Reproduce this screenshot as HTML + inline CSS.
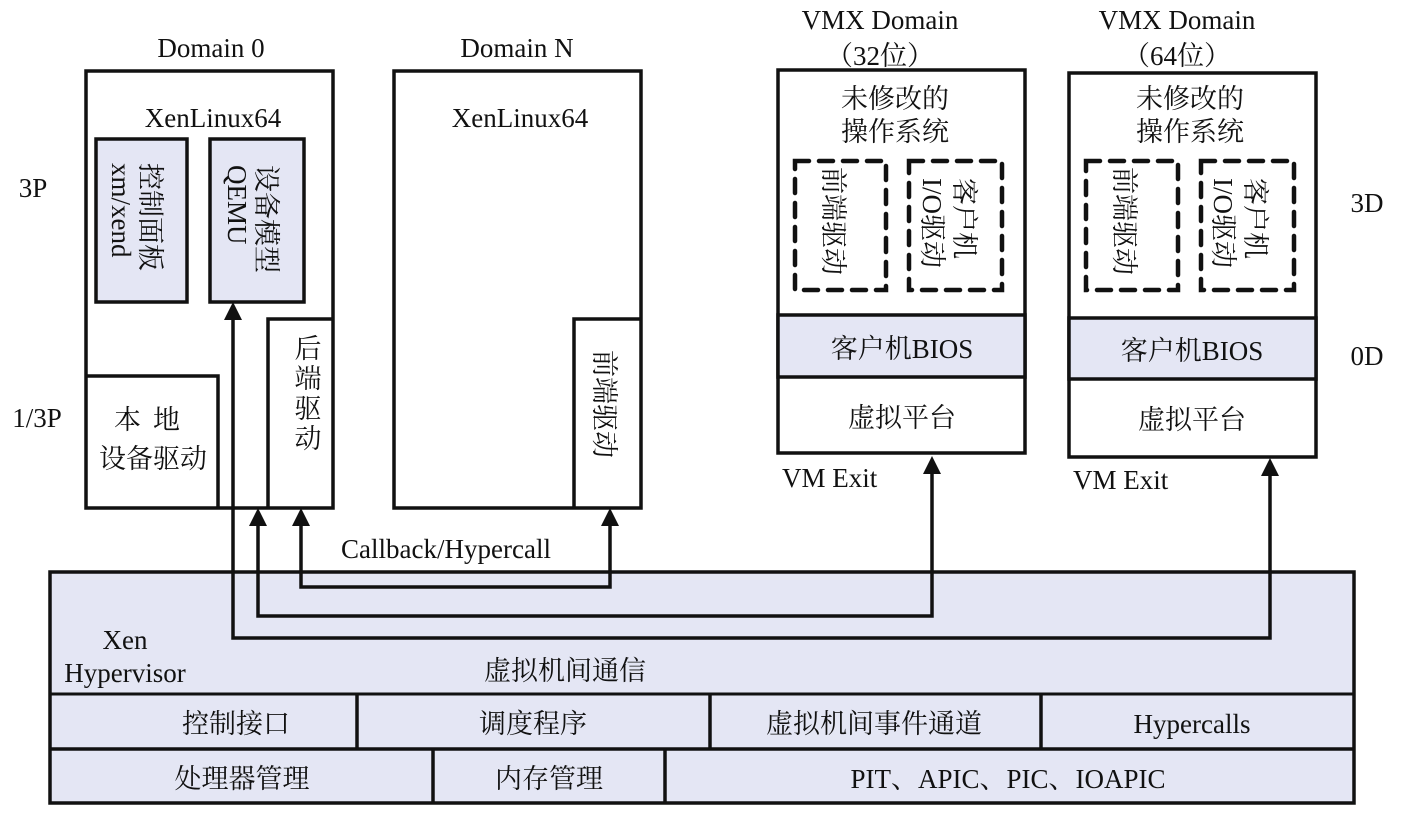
<!DOCTYPE html>
<html><head><meta charset="utf-8"><style>
html,body{margin:0;padding:0;background:#fff;}
svg{display:block;}
text{font-family:"Liberation Serif","Noto Serif CJK SC",serif;font-size:27px;fill:#111;}
.c{text-anchor:middle;}
</style></head><body>
<svg width="1405" height="816" viewBox="0 0 1405 816" xmlns="http://www.w3.org/2000/svg">
<g fill="none" stroke="#111" stroke-width="3.5">
<rect x="50" y="572" width="1304" height="231" fill="#e4e6f4"/>
<line x1="50" y1="694" x2="1354" y2="694" stroke-width="3"/>
<line x1="50" y1="749" x2="1354" y2="749"/>
<line x1="357" y1="694" x2="357" y2="749"/>
<line x1="710" y1="694" x2="710" y2="749"/>
<line x1="1041" y1="694" x2="1041" y2="749"/>
<line x1="433" y1="749" x2="433" y2="803"/>
<line x1="665" y1="749" x2="665" y2="803"/>
<rect x="86" y="71" width="247" height="437"/>
<rect x="96" y="139" width="91" height="163" fill="#e4e6f4"/>
<rect x="210" y="139" width="94" height="163" fill="#e4e6f4"/>
<polyline points="86,376 218,376 218,508"/>
<polyline points="333,319 268,319 268,508"/>
<rect x="394" y="71" width="247" height="437"/>
<polyline points="641,319 574,319 574,508"/>
<rect x="778" y="70" width="247" height="383"/>
<rect x="778" y="315" width="247" height="62" fill="#e4e6f4"/>
<rect x="1069" y="73" width="247" height="384"/>
<rect x="1069" y="318" width="247" height="61" fill="#e4e6f4"/>
<g stroke-width="4.5" stroke-dasharray="14 10" stroke-linecap="round">
<rect x="795" y="161" width="91" height="129"/>
<rect x="909" y="161" width="93" height="129"/>
<rect x="1086" y="161" width="92" height="129"/>
<rect x="1201" y="161" width="93" height="129"/>
</g>
<polyline points="301,520 301,587 610,587 610,520"/>
<polyline points="258,520 258,616 932,616 932,470"/>
<polyline points="233,316 233,638 1270,638 1270,470"/>
</g>
<g fill="#111">
<polygon points="233,302 224,320 242,320"/>
<polygon points="258,508 249,526 267,526"/>
<polygon points="301,508 292,526 310,526"/>
<polygon points="610,508 601,526 619,526"/>
<polygon points="932,456 923,474 941,474"/>
<polygon points="1270,458 1261,476 1279,476"/>
</g>
<text x="211" y="57" class="c">Domain 0</text>
<text x="517" y="57" class="c">Domain N</text>
<text x="213" y="127" class="c">XenLinux64</text>
<text x="520" y="127" class="c">XenLinux64</text>
<text x="880" y="29" class="c">VMX Domain</text>
<text x="880" y="65" class="c">（32位）</text>
<text x="1177" y="29" class="c">VMX Domain</text>
<text x="1177" y="65" class="c">（64位）</text>
<text x="33" y="197" class="c">3P</text>
<text x="37" y="427" class="c">1/3P</text>
<text x="1367" y="212" class="c">3D</text>
<text x="1367" y="365" class="c">0D</text>
<text x="141" y="163" transform="rotate(90 141 163)">控制面板</text>
<text x="112" y="163" transform="rotate(90 112 163)">xm/xend</text>
<text x="257" y="165" transform="rotate(90 257 165)">设备模型</text>
<text x="228" y="165" transform="rotate(90 228 165)">QEMU</text>
<text x="153" y="429" class="c" letter-spacing="12">本地</text>
<text x="153" y="468" class="c">设备驱动</text>
<text x="308" y="358" class="c">后</text>
<text x="308" y="388" class="c">端</text>
<text x="308" y="418" class="c">驱</text>
<text x="308" y="448" class="c">动</text>
<text x="595" y="350" transform="rotate(90 595 350)">前端驱动</text>
<text x="895" y="108" class="c">未修改的</text>
<text x="895" y="141" class="c">操作系统</text>
<text x="1190" y="108" class="c">未修改的</text>
<text x="1190" y="141" class="c">操作系统</text>
<text x="824" y="167" transform="rotate(90 824 167)">前端驱动</text>
<text x="955" y="178" transform="rotate(90 955 178)">客户机</text>
<text x="923" y="178" transform="rotate(90 923 178)">I/O驱动</text>
<text x="1115" y="167" transform="rotate(90 1115 167)">前端驱动</text>
<text x="1246" y="178" transform="rotate(90 1246 178)">客户机</text>
<text x="1214" y="178" transform="rotate(90 1214 178)">I/O驱动</text>
<text x="902" y="358" class="c">客户机BIOS</text>
<text x="1192" y="360" class="c">客户机BIOS</text>
<text x="902" y="427" class="c">虚拟平台</text>
<text x="1192" y="429" class="c">虚拟平台</text>
<text x="782" y="487">VM Exit</text>
<text x="1073" y="489">VM Exit</text>
<text x="446" y="558" class="c">Callback/Hypercall</text>
<text x="125" y="649" class="c">Xen</text>
<text x="125" y="682" class="c">Hypervisor</text>
<text x="565" y="680" class="c">虚拟机间通信</text>
<text x="236" y="733" class="c">控制接口</text>
<text x="533" y="733" class="c">调度程序</text>
<text x="874" y="733" class="c">虚拟机间事件通道</text>
<text x="1192" y="733" class="c">Hypercalls</text>
<text x="242" y="788" class="c">处理器管理</text>
<text x="549" y="788" class="c">内存管理</text>
<text x="1008" y="788" class="c">PIT、APIC、PIC、IOAPIC</text>
</svg>
</body></html>
